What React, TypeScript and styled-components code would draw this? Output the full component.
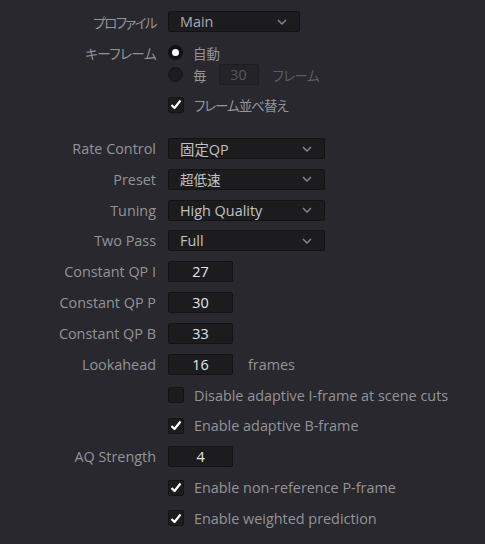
import React from 'react'
import styled, { createGlobalStyle, css } from 'styled-components'

const GlobalStyle = createGlobalStyle`
    html, body {
        margin: 0;
        padding: 0;
        background: #28282e;
    }
    body {
        font-family: 'Open Sans', 'Noto Sans CJK JP', sans-serif;
        font-size: 14.4px;
        color: #949496;
    }
`

const jp = css`
    font-family: 'Noto Sans CJK JP', sans-serif;
    font-size: 13.5px;
    font-feature-settings: 'palt' 1;
`

const Panel = styled.div`
    width: 485px;
    height: 544px;
    box-sizing: border-box;
    padding-top: 11px;
    background: #28282e;
    display: flex;
    flex-direction: column;
`

const Row = styled.div<{ $gap?: number }>`
    display: flex;
    align-items: center;
    height: 21px;
    margin-top: ${p => (p.$gap ?? 9.83)}px;
    &:first-child {
        margin-top: 0;
    }
`

const Label = styled.div<{ $jp?: boolean; $squeeze?: number }>`
    width: 156px;
    padding-right: 12px;
    text-align: right;
    white-space: nowrap;
    color: #949496;
    flex-shrink: 0;
    ${p => p.$jp && jp}
    letter-spacing: ${p => -(p.$squeeze ?? 0)}px;
`

const Select = styled.div<{ $width: number }>`
    width: ${p => p.$width}px;
    height: 21px;
    box-sizing: border-box;
    display: flex;
    align-items: center;
    justify-content: space-between;
    padding: 0 12px 0 11px;
    background: #1c1c1e;
    border: 1px solid #131314;
    border-radius: 2px;
    color: #bdbdbf;
`

const SelectText = styled.span<{ $tint?: boolean; $jp?: boolean }>`
    color: ${p => (p.$tint ? '#a9adb8' : '#c2c2c4')};
    ${p => p.$jp && jp}
`

const Chevron = () => (
    <svg width='10' height='6' viewBox='0 0 10 6'>
        <path d='M1 1 L5 5 L9 1' fill='none' stroke='#8a8a8c' strokeWidth='1.4' />
    </svg>
)

const NumberBox = styled.div<{ $width?: number; $disabled?: boolean }>`
    width: ${p => p.$width ?? 65}px;
    height: 21px;
    box-sizing: border-box;
    display: flex;
    align-items: center;
    justify-content: center;
    background: ${p => (p.$disabled ? '#242428' : '#1c1c1e')};
    border: 1px solid ${p => (p.$disabled ? '#1e1e21' : '#131314')};
    border-radius: 2px;
    color: ${p => (p.$disabled ? '#58585c' : '#e6e6e8')};
`

const Unit = styled.span<{ $dim?: boolean }>`
    margin-left: ${p => (p.$dim ? 14 : 15)}px;
    color: ${p => (p.$dim ? '#5c5c60' : '#949496')};
    ${p => p.$dim && jp}
    letter-spacing: ${p => (p.$dim ? -0.5 : 0)}px;
`

const RadioCircle = styled.span<{ $on?: boolean }>`
    width: 15px;
    height: 15px;
    box-sizing: border-box;
    border-radius: 50%;
    background: ${p => (p.$on ? '#ffffff' : '#1c1c1e')};
    border: ${p => (p.$on ? '4px solid #111113' : '1px solid #151517')};
    flex-shrink: 0;
`

const OptionText = styled.span<{ $jp?: boolean; $squeeze?: number }>`
    margin-left: 10px;
    color: #949496;
    white-space: nowrap;
    ${p => p.$jp && jp}
    letter-spacing: ${p => -(p.$squeeze ?? 0)}px;
`

const Box = styled.span`
    width: 16px;
    height: 16px;
    box-sizing: border-box;
    border-radius: 2px;
    background: #1c1c1e;
    border: 1px solid #131314;
    display: flex;
    align-items: center;
    justify-content: center;
    flex-shrink: 0;
`

const Tick = () => (
    <svg width='12' height='11' viewBox='0 0 12 11'>
        <path d='M1.5 6 L4.5 9 L10.5 1.5' fill='none' stroke='#ffffff' strokeWidth='2.2' strokeLinejoin='round' />
    </svg>
)

const Check = ({ on, text, jp, squeeze }: { on?: boolean; text: string; jp?: boolean; squeeze?: number }) => (
    <>
        <Box>{on && <Tick />}</Box>
        <OptionText $jp={jp} $squeeze={squeeze}>
            {text}
        </OptionText>
    </>
)

const App = () => {
    return (
        <>
            <GlobalStyle />
            <Panel>
                <Row>
                    <Label $jp $squeeze={1.6}>
                        プロファイル
                    </Label>
                    <Select $width={132}>
                        <SelectText $tint>Main</SelectText>
                        <Chevron />
                    </Select>
                </Row>
                <Row $gap={10}>
                    <Label $jp $squeeze={0.5}>
                        キーフレーム
                    </Label>
                    <RadioCircle $on />
                    <OptionText $jp>自動</OptionText>
                </Row>
                <Row $gap={1}>
                    <Label />
                    <RadioCircle />
                    <OptionText $jp>毎</OptionText>
                    <NumberBox $width={40} $disabled style={{ marginLeft: 12 }}>
                        30
                    </NumberBox>
                    <Unit $dim>フレーム</Unit>
                </Row>
                <Row $gap={9}>
                    <Label />
                    <Check on jp squeeze={1} text='フレーム並べ替え' />
                </Row>
                <Row $gap={23}>
                    <Label>Rate Control</Label>
                    <Select $width={157}>
                        <SelectText>固定QP</SelectText>
                        <Chevron />
                    </Select>
                </Row>
                <Row>
                    <Label>Preset</Label>
                    <Select $width={157}>
                        <SelectText $jp>超低速</SelectText>
                        <Chevron />
                    </Select>
                </Row>
                <Row>
                    <Label>Tuning</Label>
                    <Select $width={157}>
                        <SelectText>High Quality</SelectText>
                        <Chevron />
                    </Select>
                </Row>
                <Row>
                    <Label>Two Pass</Label>
                    <Select $width={157}>
                        <SelectText>Full</SelectText>
                        <Chevron />
                    </Select>
                </Row>
                <Row>
                    <Label>Constant QP I</Label>
                    <NumberBox>27</NumberBox>
                </Row>
                <Row>
                    <Label>Constant QP P</Label>
                    <NumberBox>30</NumberBox>
                </Row>
                <Row>
                    <Label>Constant QP B</Label>
                    <NumberBox>33</NumberBox>
                </Row>
                <Row>
                    <Label>Lookahead</Label>
                    <NumberBox>16</NumberBox>
                    <Unit>frames</Unit>
                </Row>
                <Row>
                    <Label />
                    <Check text='Disable adaptive I-frame at scene cuts' />
                </Row>
                <Row>
                    <Label />
                    <Check on text='Enable adaptive B-frame' />
                </Row>
                <Row>
                    <Label>AQ Strength</Label>
                    <NumberBox>4</NumberBox>
                </Row>
                <Row>
                    <Label />
                    <Check on text='Enable non-reference P-frame' />
                </Row>
                <Row>
                    <Label />
                    <Check on text='Enable weighted prediction' />
                </Row>
            </Panel>
        </>
    )
}

export default App
